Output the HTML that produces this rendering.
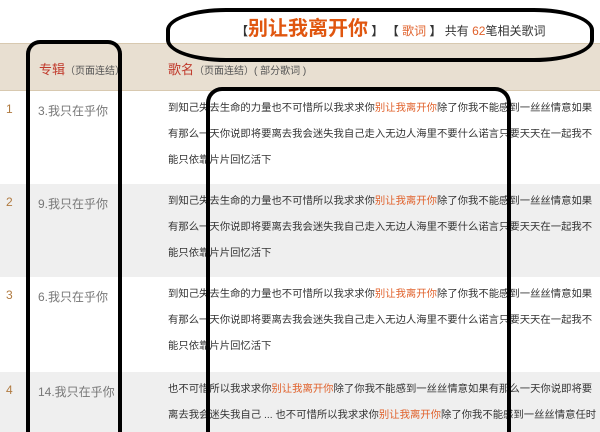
<!DOCTYPE html>
<html><head><meta charset="utf-8"><style>
html,body{margin:0;width:600px;height:432px;overflow:hidden}
body{background:#fff;font-family:"Liberation Sans","Noto Sans CJK SC",sans-serif;position:relative}
.a{position:absolute}
.hdr{left:0;top:43px;width:600px;height:46px;background:#e8dfd1;border-top:1px solid #d8c9b0;border-bottom:1px solid #d8c9b0}
.row{left:0;width:600px;height:93px;overflow:hidden}
.idx{position:absolute;left:6px;top:11px;font-size:12px;color:#b07a40}
.alb{position:absolute;left:38px;top:11px;font-size:12px;color:#777}
.lyr{position:absolute;left:168px;top:5px;width:432px;font-size:10.35px;line-height:26px;color:#333;white-space:nowrap;overflow:hidden}
.o{color:#e0602a}
.box{position:absolute;border:4px solid #000;border-bottom:0;box-sizing:border-box}
</style></head><body>
<div class="a" style="left:236px;top:12px;font-size:12px;color:#333;white-space:nowrap"><b>【</b><b style="font-size:20px;color:#e0560f">别让我离开你</b> <b>】</b> <b>【</b> <span class="o">歌词</span> <b>】</b> 共有 <span class="o">62</span>笔相关歌词</div>
<div class="a hdr"></div>
<div class="a" style="left:39px;top:59px;font-size:13px;color:#c0392b">专辑<span style="font-size:10px;color:#555">（页面连结）</span></div>
<div class="a" style="left:168px;top:59px;font-size:13px;color:#c0392b">歌名<span style="font-size:10px;color:#555">（页面连结）( 部分歌词 )</span></div>

<div class="a row" style="top:91px;background:#fff"><span class="idx">1</span><span class="alb">3.我只在乎你</span><div class="lyr">到知己失去生命的力量也不可惜所以我求求你<span class="o">别让我离开你</span>除了你我不能感到一丝丝情意如果<br>有那么一天你说即将要离去我会迷失我自己走入无边人海里不要什么诺言只要天天在一起我不<br>能只依靠片片回忆活下</div></div>
<div class="a row" style="top:184px;background:#efefef"><span class="idx">2</span><span class="alb">9.我只在乎你</span><div class="lyr">到知己失去生命的力量也不可惜所以我求求你<span class="o">别让我离开你</span>除了你我不能感到一丝丝情意如果<br>有那么一天你说即将要离去我会迷失我自己走入无边人海里不要什么诺言只要天天在一起我不<br>能只依靠片片回忆活下</div></div>
<div class="a row" style="top:277px;background:#fff"><span class="idx">3</span><span class="alb">6.我只在乎你</span><div class="lyr">到知己失去生命的力量也不可惜所以我求求你<span class="o">别让我离开你</span>除了你我不能感到一丝丝情意如果<br>有那么一天你说即将要离去我会迷失我自己走入无边人海里不要什么诺言只要天天在一起我不<br>能只依靠片片回忆活下</div></div>
<div class="a row" style="top:372px;background:#efefef;height:60px"><span class="idx">4</span><span class="alb">14.我只在乎你</span><div class="lyr">也不可惜所以我求求你<span class="o">别让我离开你</span>除了你我不能感到一丝丝情意如果有那么一天你说即将要<br>离去我会迷失我自己 ... 也不可惜所以我求求你<span class="o">别让我离开你</span>除了你我不能感到一丝丝情意任时</div></div>

<div class="box" style="left:166px;top:8px;width:428px;height:54px;border-bottom:4px solid #000;border-radius:60px/22px"></div>
<div class="box" style="left:26px;top:40px;width:96px;height:392px;border-radius:14px 14px 0 0"></div>
<div class="box" style="left:206px;top:87px;width:305px;height:345px;border-radius:16px 16px 0 0"></div>
</body></html>
